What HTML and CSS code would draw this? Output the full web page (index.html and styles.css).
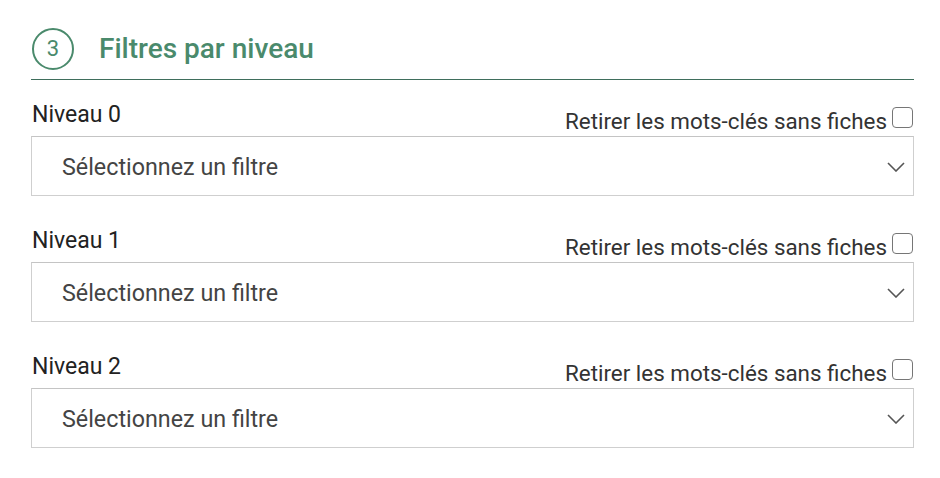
FILE: index.html
```html
<!DOCTYPE html>
<html lang="fr">
<head>
<meta charset="utf-8">
<link rel="stylesheet" href="styles.css">
</head>
<body>
<div class="panel">
  <div class="section-head">
    <span class="step">3</span>
    <h2 class="title">Filtres par niveau</h2>
  </div>
  <div class="level">
    <div class="level-head">
      <span class="level-label">Niveau 0</span>
      <label class="option">Retirer les mots-clés sans fiches<span class="checkbox"></span></label>
    </div>
    <div class="select">
      <span class="select-text">Sélectionnez un filtre</span>
      <svg class="chevron" width="18" height="10" viewBox="0 0 18 10"><path d="M1 1 L9 9 L17 1" fill="none" stroke="#555" stroke-width="1.6"/></svg>
    </div>
  </div>
  <div class="level">
    <div class="level-head">
      <span class="level-label">Niveau 1</span>
      <label class="option">Retirer les mots-clés sans fiches<span class="checkbox"></span></label>
    </div>
    <div class="select">
      <span class="select-text">Sélectionnez un filtre</span>
      <svg class="chevron" width="18" height="10" viewBox="0 0 18 10"><path d="M1 1 L9 9 L17 1" fill="none" stroke="#555" stroke-width="1.6"/></svg>
    </div>
  </div>
  <div class="level">
    <div class="level-head">
      <span class="level-label">Niveau 2</span>
      <label class="option">Retirer les mots-clés sans fiches<span class="checkbox"></span></label>
    </div>
    <div class="select">
      <span class="select-text">Sélectionnez un filtre</span>
      <svg class="chevron" width="18" height="10" viewBox="0 0 18 10"><path d="M1 1 L9 9 L17 1" fill="none" stroke="#555" stroke-width="1.6"/></svg>
    </div>
  </div>
</div>
</body>
</html>
```
FILE: styles.css
```css
* { box-sizing: border-box; }
html, body { margin: 0; padding: 0; background: #fff; }
body { font-family: Roboto, "Liberation Sans", Arial, sans-serif; color: #222; }
.panel { width: 940px; padding: 0 26px 0 31px; }
.section-head {
  display: flex;
  align-items: center;
  height: 80px;
  padding-top: 18px;
  border-bottom: 1px solid #3f6e5c;
}
.step {
  width: 42px;
  height: 42px;
  border: 2.5px solid #4a8a6c;
  border-radius: 50%;
  display: flex;
  align-items: center;
  justify-content: center;
  color: #4a8a6c;
  font-size: 22px;
  margin-left: 1px;
  margin-right: 25px;
}
.title {
  margin: 0;
  font-size: 28px;
  font-weight: 500;
  color: #4a8a6c;
}
.level { padding-top: 20px; }
.level + .level { padding-top: 30px; }
.level-head {
  display: flex;
  justify-content: space-between;
  align-items: flex-start;
  height: 36px;
}
.level-label {
  font-size: 23px;
  line-height: 24px;
  margin-top: 3px;
  margin-left: 1px;
  color: #222;
}
.option {
  display: flex;
  align-items: flex-start;
  font-size: 22.4px;
  line-height: 24px;
  color: #333;
  margin-top: 9px;
}
.checkbox {
  width: 21px;
  height: 21px;
  border: 1.5px solid #767676;
  border-radius: 4px;
  margin-left: 5px;
  margin-top: -2px;
  margin-right: 1px;
}
.select {
  height: 60px;
  border: 1px solid #cfcfcf;
  border-top-color: #c4c4c4;
  display: flex;
  align-items: center;
  justify-content: space-between;
  padding: 0 8px 0 30px;
}
.select-text {
  font-size: 23.3px;
  color: #444;
  margin-top: 1px;
}
.chevron { margin-top: 1px; }
```
